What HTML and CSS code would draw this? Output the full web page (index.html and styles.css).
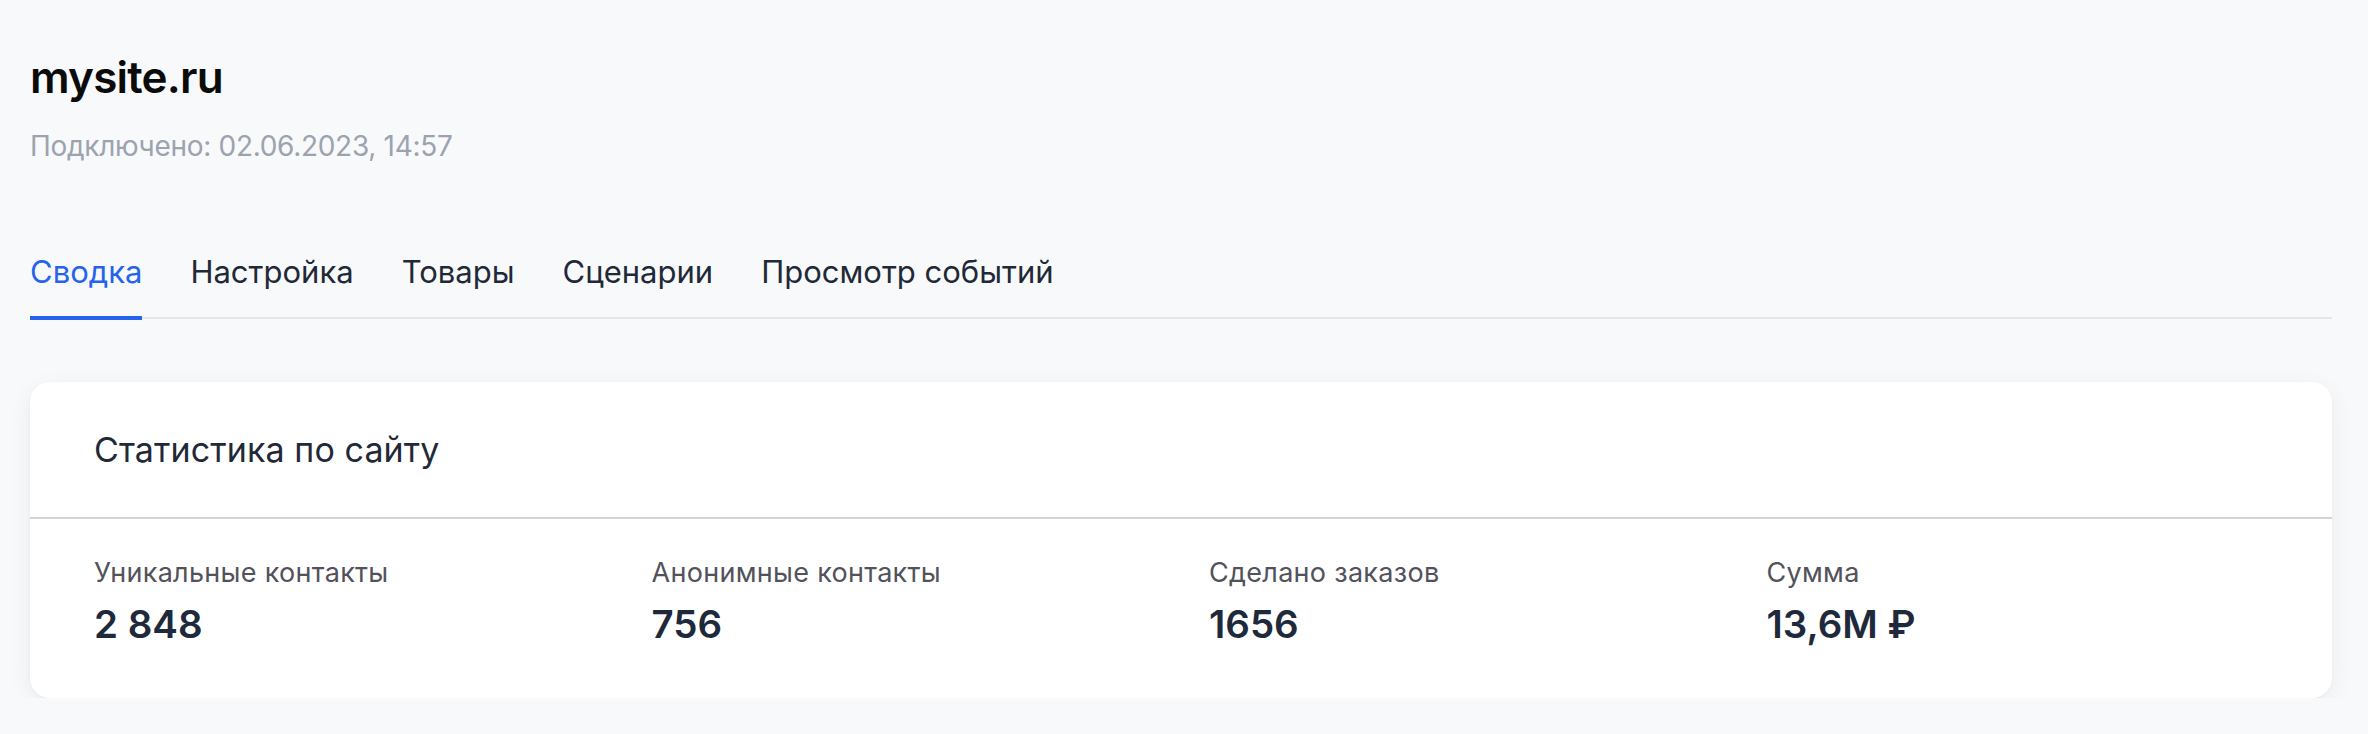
FILE: index.html
```html
<!DOCTYPE html>
<html lang="ru">
<head>
<meta charset="utf-8">
<title>mysite.ru</title>
<link rel="stylesheet" href="styles.css">
</head>
<body>
<main class="page">
  <header class="site-head">
    <h1 class="site-title">mysite.ru</h1>
    <p class="site-sub">Подключено: 02.06.2023, 14:57</p>
  </header>
  <nav class="tabs">
    <a class="tab tab-active" href="#">Сводка</a>
    <a class="tab" href="#">Настройка</a>
    <a class="tab" href="#">Товары</a>
    <a class="tab" href="#">Сценарии</a>
    <a class="tab" href="#">Просмотр событий</a>
  </nav>
  <section class="card">
    <div class="card-head">
      <h2 class="card-title">Статистика по сайту</h2>
    </div>
    <div class="stats">
      <div class="stat">
        <div class="stat-label">Уникальные контакты</div>
        <div class="stat-value">2 848</div>
      </div>
      <div class="stat">
        <div class="stat-label">Анонимные контакты</div>
        <div class="stat-value">756</div>
      </div>
      <div class="stat">
        <div class="stat-label">Сделано заказов</div>
        <div class="stat-value">1656</div>
      </div>
      <div class="stat">
        <div class="stat-label">Сумма</div>
        <div class="stat-value">13,6M ₽</div>
      </div>
    </div>
  </section>
</main>
</body>
</html>
```
FILE: styles.css
```css
html, body {
  margin: 0;
  padding: 0;
  background: #f8f9fb;
}
body {
  font-family: Inter, "Noto Sans", "Liberation Sans", sans-serif;
  color: #1f2937;
}
.page {
  padding: 51px 36px 0 30px;
}
.site-title {
  margin: 0;
  font-size: 44px;
  line-height: 52px;
  font-weight: 600;
  color: #0b0b0c;
  letter-spacing: -0.8px;
}
.site-sub {
  margin: 23px 0 0;
  font-size: 28px;
  line-height: 40px;
  letter-spacing: -0.3px;
  color: #9ca3af;
}
.tabs {
  display: flex;
  gap: 48px;
  margin-top: 86px;
  border-bottom: 2px solid #e5e7eb;
}
.tab {
  position: relative;
  display: block;
  padding-bottom: 25px;
  font-size: 31px;
  line-height: 40px;
  letter-spacing: 0;
  color: #1f2937;
  text-decoration: none;
}
.tab-active {
  color: #2563eb;
}
.tab-active::after {
  content: "";
  position: absolute;
  left: 0;
  right: 0;
  bottom: -3px;
  height: 4px;
  background: #2563eb;
}
.card {
  margin-top: 63px;
  background: #ffffff;
  border-radius: 20px;
  box-shadow: 0 6px 24px rgba(17, 24, 39, 0.06), 0 1px 3px rgba(17, 24, 39, 0.04);
}
.card-head {
  padding: 46px 64px 45px;
  border-bottom: 2px solid #d4d4d8;
}
.card-title {
  margin: 0;
  font-size: 34px;
  line-height: 44px;
  font-weight: 400;
  letter-spacing: 0.1px;
  color: #1f2937;
}
.stats {
  display: grid;
  grid-template-columns: repeat(4, 1fr);
  gap: 56px;
  padding: 36px 64px 52px;
}
.stat-label {
  font-size: 27px;
  line-height: 36px;
  letter-spacing: 0.3px;
  color: #52525b;
}
.stat-value {
  margin-top: 11px;
  font-size: 38.5px;
  line-height: 44px;
  font-weight: 600;
  color: #1e293b;
}
```
